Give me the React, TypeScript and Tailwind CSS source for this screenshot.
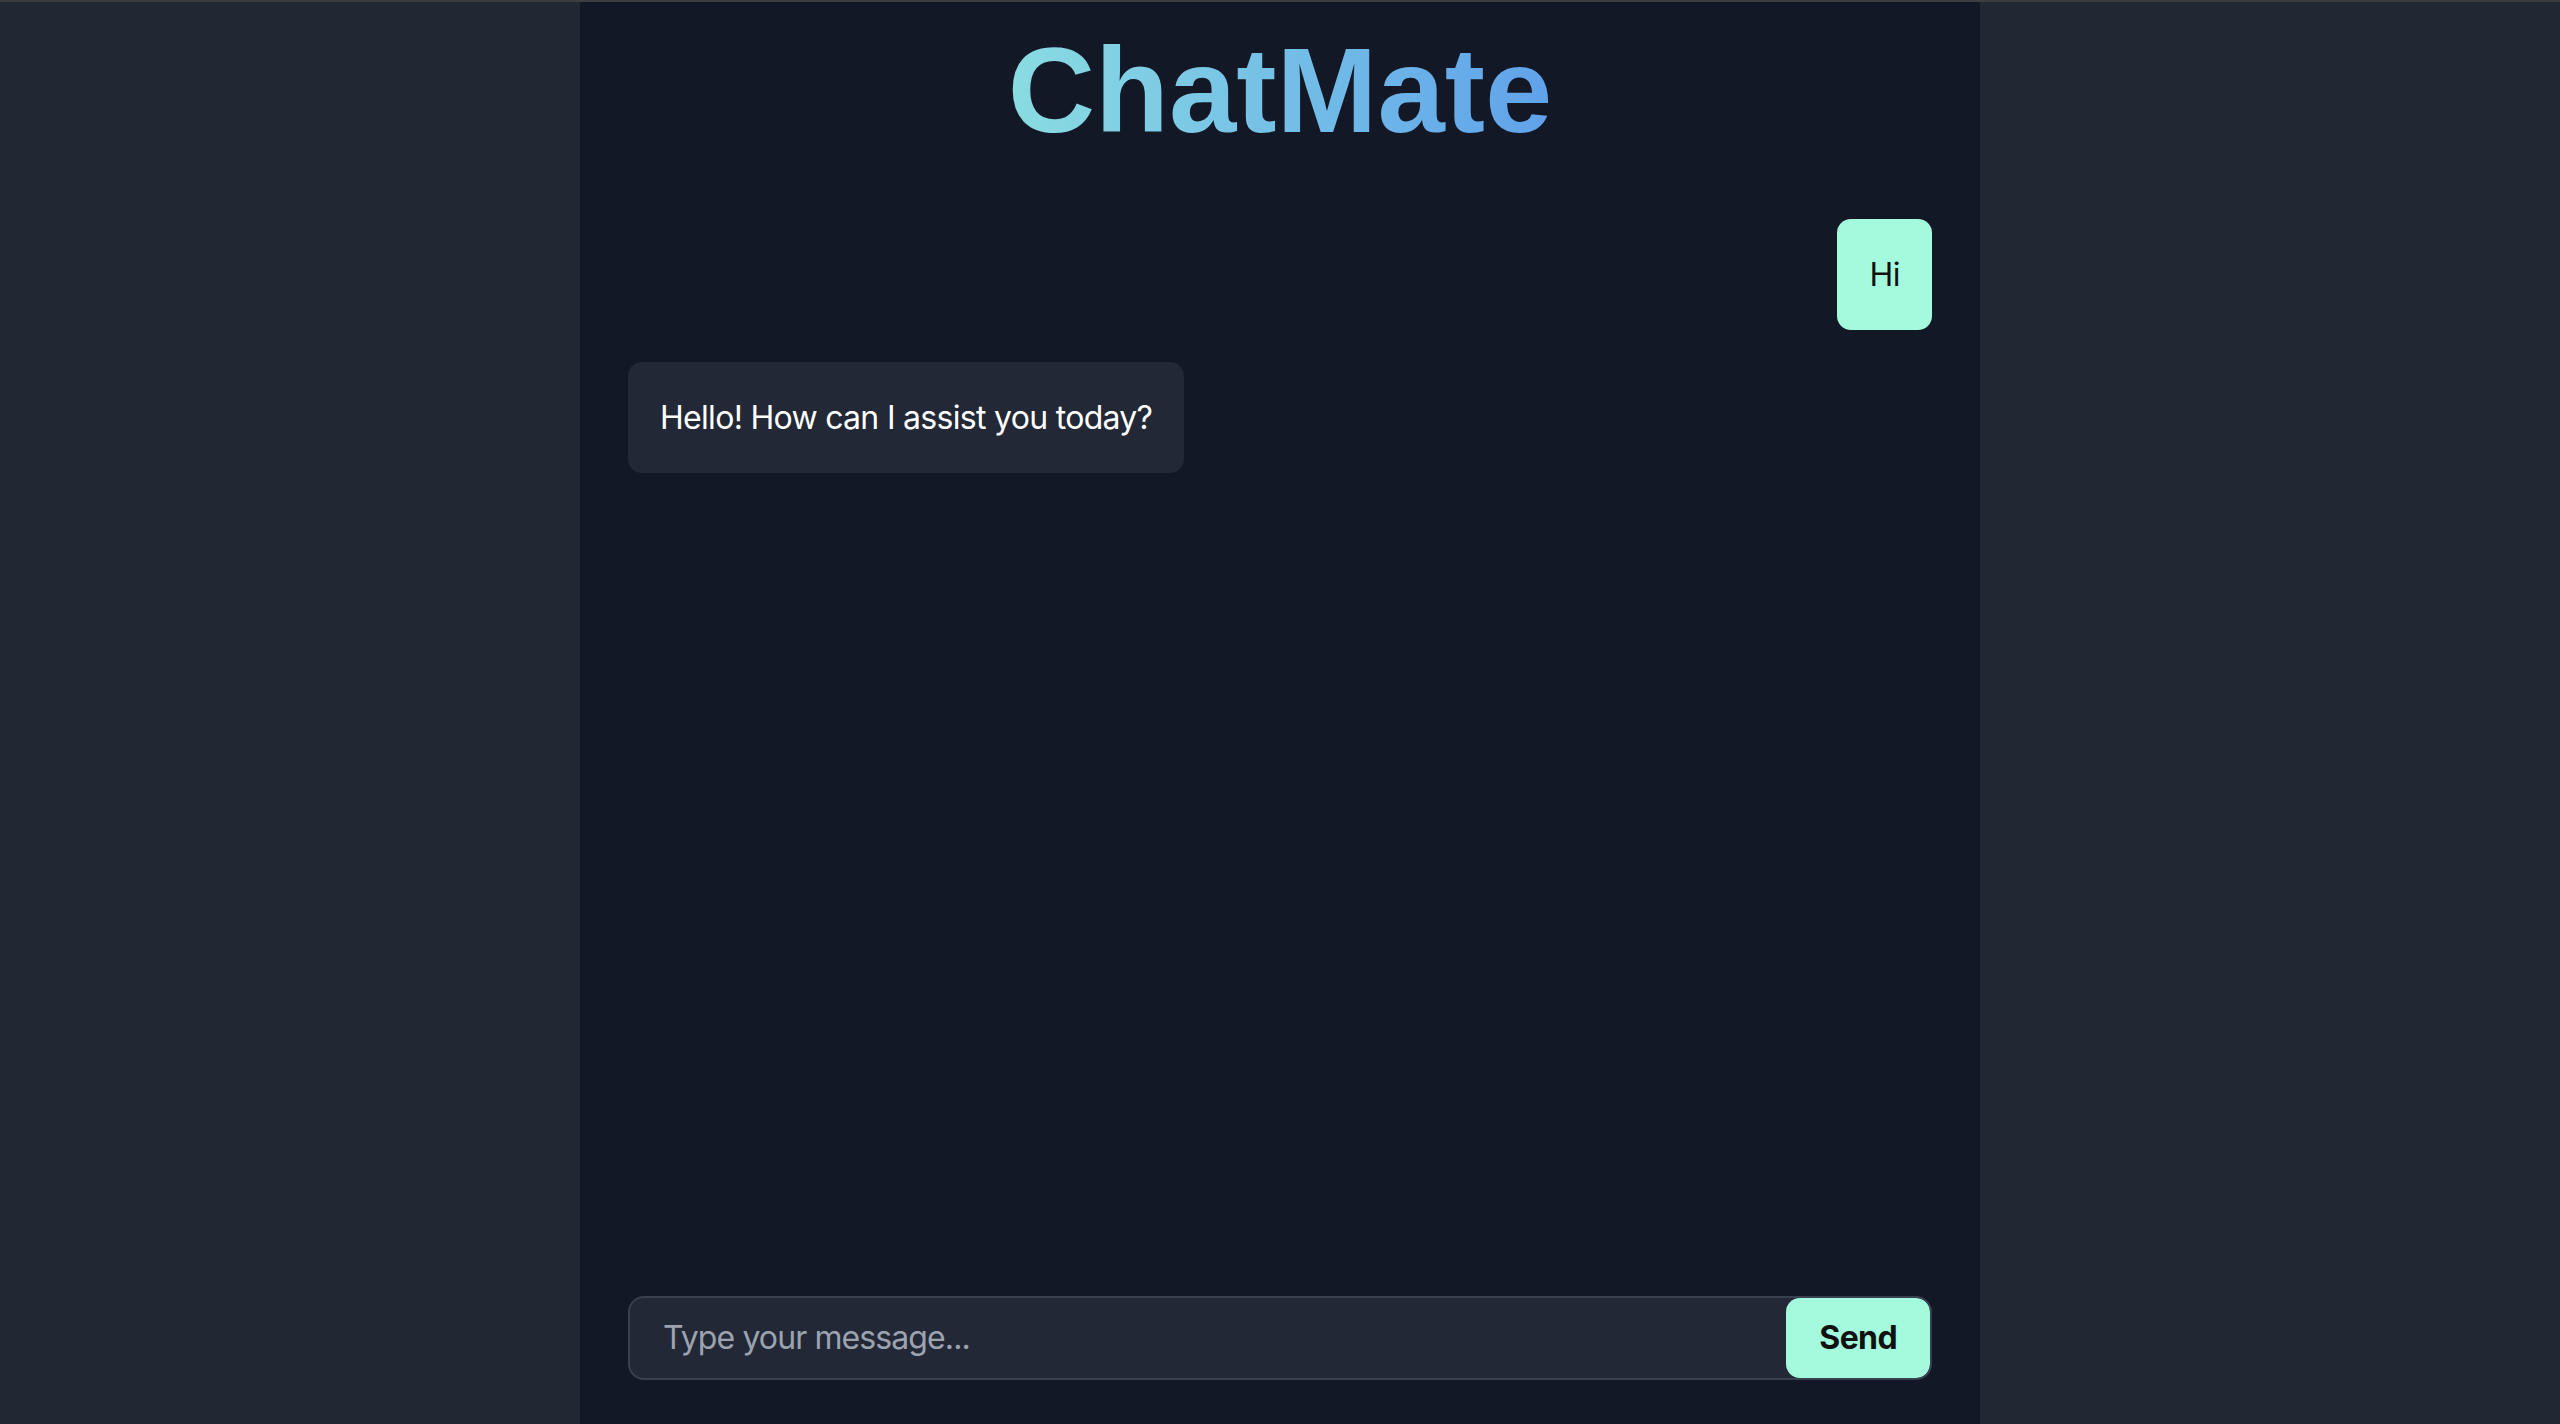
import React, { useState } from 'react'

type Msg = { id: number; role: 'user' | 'bot'; text: string }

const messages: Msg[] = [
    { id: 1, role: 'user', text: 'Hi' },
    { id: 2, role: 'bot', text: 'Hello! How can I assist you today?' },
]

export default function App() {
    const [value, setValue] = useState('')

    return (
        <div className="h-screen flex flex-col bg-[#222734] font-['Inter',sans-serif] overflow-hidden">
            <div className="h-[2px] w-full flex-none bg-[#3d3d3f]" />
            <div className="flex-1 min-h-0 w-[1400px] mx-auto bg-[#131826] flex flex-col px-12 pt-[28px] pb-[44px]">
                <h1 className="flex justify-center">
                    <span className="inline-block font-['Liberation_Sans',Arial,sans-serif] font-bold text-[121px] leading-none bg-linear-to-r from-[#8adce1] to-[#60a2ea] bg-clip-text text-transparent">
                        ChatMate
                    </span>
                </h1>

                <div className="flex-1 min-h-0 mt-[68px] flex flex-col gap-8 overflow-y-auto">
                    {messages.map((m) => (
                        <div
                            key={m.id}
                            className={
                                m.role === 'user'
                                    ? 'self-end bg-[#a3fadd] text-[#111111] rounded-[14px] p-8 text-[32px] leading-[47px] tracking-[-0.5px]'
                                    : 'self-start bg-[#222835] text-white rounded-[14px] p-8 text-[32px] leading-[47px] tracking-[-0.7px]'
                            }
                        >
                            {m.text}
                        </div>
                    ))}
                </div>

                <div className="flex-none flex items-stretch h-[84px] border-2 border-[#394050] bg-[#222835] rounded-2xl overflow-hidden">
                    <input
                        autoFocus
                        value={value}
                        onChange={(e) => setValue(e.target.value)}
                        placeholder="Type your message..."
                        className="flex-1 min-w-0 bg-transparent pl-[33px] pr-[34px] text-[32px] tracking-[-0.9px] text-white caret-white placeholder:text-[#9ca3af] outline-none"
                    />
                    <button className="flex-none px-[33px] rounded-[14px] bg-[#a3fadd] text-[#111111] text-[32px] tracking-[-0.6px] font-bold">
                        Send
                    </button>
                </div>
            </div>
        </div>
    )
}
